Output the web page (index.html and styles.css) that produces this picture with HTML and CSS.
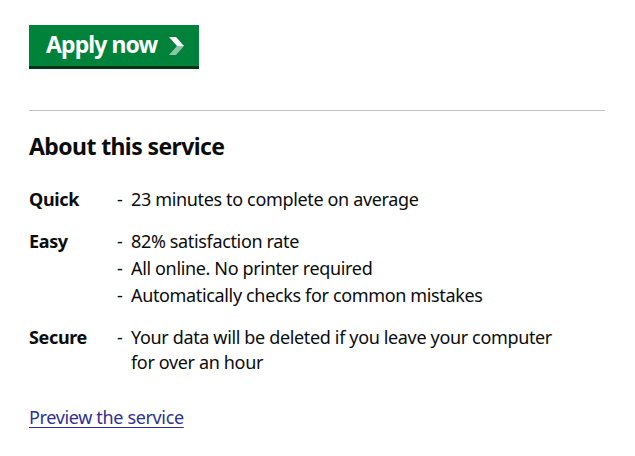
FILE: index.html
```html
<!DOCTYPE html>
<html lang="en">
<head>
<meta charset="utf-8">
<title>Apply now</title>
<link rel="stylesheet" href="styles.css">
</head>
<body>
<main class="page">
  <a class="start-button" href="#">
    <span class="start-label">Apply now</span>
    <svg class="chevron" width="15" height="18" viewBox="0 0 15 18" aria-hidden="true">
      <polygon points="0,0 7,0 15,9 8,9" fill="#ffffff"/>
      <polygon points="8,9 15,9 7,18 0,18" fill="#ffffff" fill-opacity="0.55"/>
    </svg>
  </a>
  <hr class="rule">
  <h2 class="heading">About this service</h2>
  <div class="facts">
    <div class="fact">
      <div class="fact-label">Quick</div>
      <ul class="fact-list">
        <li>23 minutes to complete on average</li>
      </ul>
    </div>
    <div class="fact">
      <div class="fact-label">Easy</div>
      <ul class="fact-list">
        <li>82% satisfaction rate</li>
        <li>All online. No printer required</li>
        <li>Automatically checks for common mistakes</li>
      </ul>
    </div>
    <div class="fact">
      <div class="fact-label">Secure</div>
      <ul class="fact-list">
        <li>Your data will be deleted if you leave your computer for over an hour</li>
      </ul>
    </div>
  </div>
  <a class="preview-link" href="#">Preview the service</a>
</main>
</body>
</html>
```
FILE: styles.css
```css
* { box-sizing: border-box; }
html, body { margin: 0; padding: 0; background: #ffffff; }
body {
  font-family: "Noto Sans", "Liberation Sans", sans-serif;
  color: #0b0c0c;
}
.page {
  width: 576px;
  margin-left: 29px;
  padding-top: 25px;
}
.start-button {
  display: inline-flex;
  align-items: center;
  gap: 12px;
  height: 44px;
  padding: 0 15px 3px 17px;
  background: #00823b;
  box-shadow: inset 0 -3px 0 #003618;
  color: #ffffff;
  text-decoration: none;
  font-weight: 700;
  font-size: 23px;
  letter-spacing: -0.9px;
}
.start-label { line-height: 1; position: relative; top: -1px; }
.chevron { display: block; }
.rule {
  border: 0;
  border-top: 1px solid #bfc1c3;
  margin: 41px 0 0;
  height: 0;
}
.heading {
  margin: 21px 0 0;
  font-size: 23px;
  line-height: 28px;
  font-weight: 700;
  letter-spacing: -0.6px;
}
.facts {
  margin-top: 27px;
  display: flex;
  flex-direction: column;
  gap: 17px;
}
.fact {
  display: flex;
  font-size: 18px;
  line-height: 25px;
  letter-spacing: -0.35px;
}
.fact-label {
  width: 88px;
  flex: none;
  font-weight: 700;
}
.fact-list {
  list-style: none;
  margin: 0;
  padding: 0 0 0 14px;
  width: 460px;
  display: flex;
  flex-direction: column;
  gap: 2px;
}
.fact-list li { position: relative; }
.fact-list li::before {
  content: "-";
  position: absolute;
  left: -14px;
  top: 0;
}
.preview-link {
  display: inline-block;
  margin-top: 30px;
  font-size: 18px;
  line-height: 25px;
  letter-spacing: -0.35px;
  color: #2e3192;
  text-decoration: underline;
  text-underline-offset: 3px;
}
```
